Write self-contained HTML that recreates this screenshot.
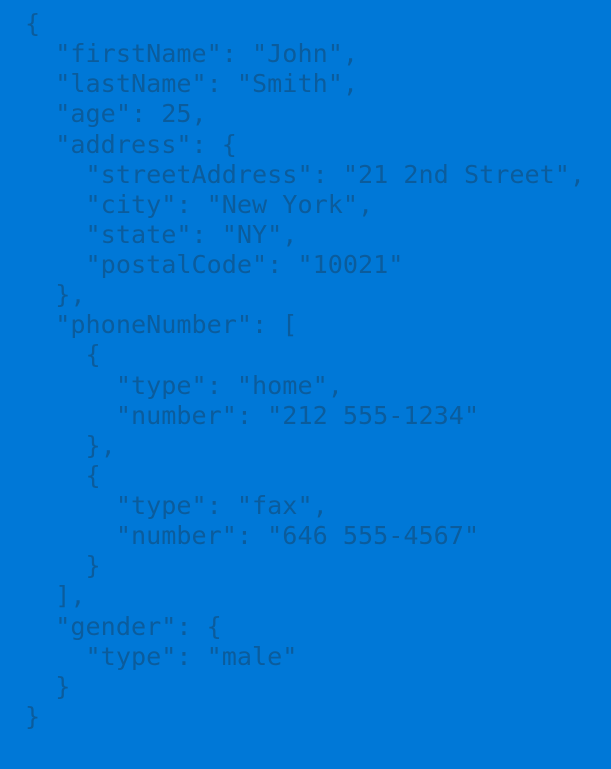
<!DOCTYPE html>
<html><head><style>
html,body{margin:0;padding:0;background:#0078d7;width:611px;height:769px;overflow:hidden}
pre{margin:0;padding:9px 0 0 25px;font-family:"DejaVu Sans Mono","Liberation Mono",monospace;font-size:25.15px;line-height:30.12px;color:#0b5c9c}
</style></head><body><pre>{
  "firstName": "John",
  "lastName": "Smith",
  "age": 25,
  "address": {
    "streetAddress": "21 2nd Street",
    "city": "New York",
    "state": "NY",
    "postalCode": "10021"
  },
  "phoneNumber": [
    {
      "type": "home",
      "number": "212 555-1234"
    },
    {
      "type": "fax",
      "number": "646 555-4567"
    }
  ],
  "gender": {
    "type": "male"
  }
}</pre></body></html>
